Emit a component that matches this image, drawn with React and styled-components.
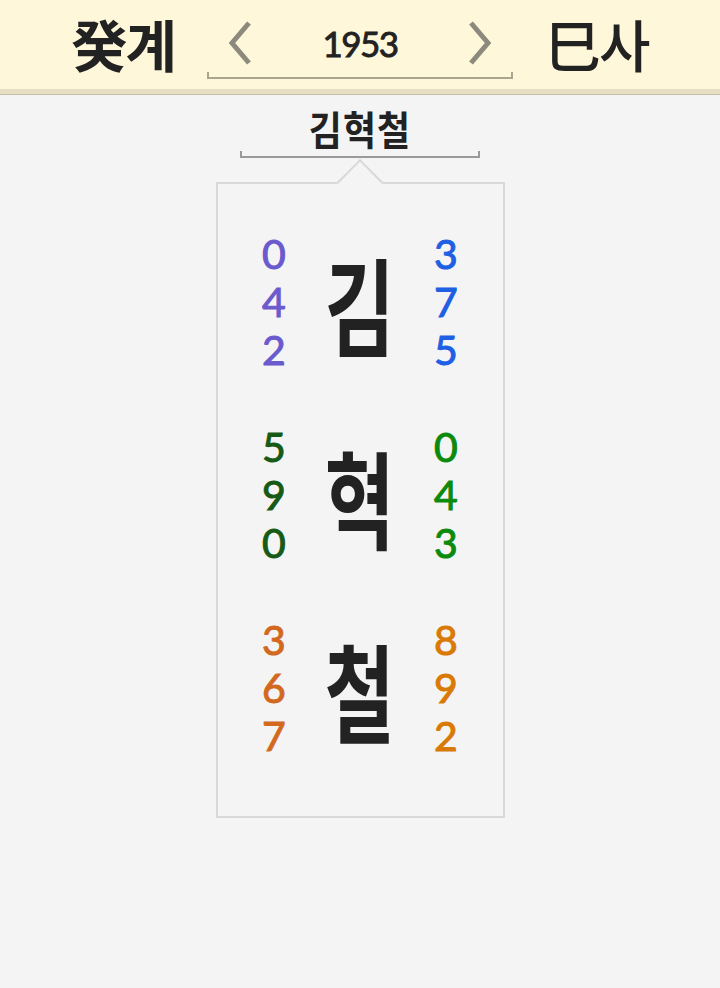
import React from 'react';
import styled, { createGlobalStyle } from 'styled-components';

const GlobalStyle = createGlobalStyle`
  html, body {
    margin: 0;
    padding: 0;
    background: #f4f4f4;
  }
  body {
    font-family: "Noto Sans CJK KR", "Noto Sans", sans-serif;
    color: #222;
  }
`;

const Page = styled.div`
  width: 720px;
  min-height: 988px;
  background: #f4f4f4;
`;

// Header
const Header = styled.header`
  height: 89px;
  background: #fff7da;
  border-bottom: 5px solid #e6dfc4;
  box-shadow: 0 1px 0 #c4bfa6;
  display: flex;
  align-items: center;
  justify-content: center;
  gap: 32px;
`;

const Ganji = styled.div`
  font-family: "Noto Sans CJK KR", "Noto Sans CJK SC", sans-serif;
  font-size: 56px;
  font-weight: ${(props) => (props.bold ? 700 : 500)};
  line-height: 1;
  letter-spacing: -2px;
  color: #222;
  margin-top: -4px;
`;

const YearBox = styled.div`
  position: relative;
  width: 306px;
  height: 58px;
  display: flex;
  align-items: center;
  justify-content: space-between;
  padding: 0 18px;
  box-sizing: border-box;
  margin-top: 10px;
  border: 2px solid #a9a58f;
  border-top: none;
  &::before {
    content: '';
    position: absolute;
    left: -2px;
    right: -2px;
    top: 0;
    height: 51px;
    background: #fff7da;
  }
`;

const Arrow = styled.svg`
  position: relative;
  width: 26px;
  height: 44px;
  margin-top: -12px;
`;

const Year = styled.span`
  position: relative;
  font-family: "Lato", "Noto Sans", sans-serif;
  font-size: 35px;
  letter-spacing: -1.5px;
  -webkit-text-stroke: 0.9px #222;
  color: #222;
  margin-top: -12px;
`;

// Name area
const Body = styled.main`
  display: flex;
  flex-direction: column;
  align-items: center;
  padding-top: 10px;
`;

const NameTitle = styled.div`
  font-size: 36px;
  font-weight: 700;
  line-height: 46px;
  color: #222;
  letter-spacing: 1px;
  transform: scaleY(1.12);
`;

const NameBracket = styled.div`
  width: 240px;
  height: 7px;
  box-sizing: border-box;
  border: 2px solid #999;
  border-top: none;
  margin-top: 1px;
`;

const Card = styled.section`
  position: relative;
  width: 289px;
  box-sizing: border-box;
  margin-top: 24px;
  border: 2px solid #d8d8d8;
  background: #f4f4f4;
  padding: 46px 0 56px;
  display: flex;
  flex-direction: column;
  gap: 49px;
  &::before {
    content: '';
    position: absolute;
    top: -18px;
    left: 50%;
    width: 32px;
    height: 32px;
    margin-left: -17px;
    background: #f4f4f4;
    border-top: 2px solid #d8d8d8;
    border-left: 2px solid #d8d8d8;
    transform: rotate(45deg);
  }
`;

const Row = styled.div`
  position: relative;
  display: flex;
  justify-content: center;
  align-items: flex-start;
  gap: 30px;
`;

const Digits = styled.div`
  width: 32px;
  display: flex;
  flex-direction: column;
  align-items: center;
  font-family: "Lato", "Noto Sans", sans-serif;
  font-size: 41px;
  line-height: 48px;
  color: ${(props) => props.color};
  -webkit-text-stroke: 1px ${(props) => props.color};
`;

const CharBox = styled.div`
  width: 80px;
  height: 144px;
  display: flex;
  align-items: center;
  justify-content: center;
`;

const BigChar = styled.span`
  display: inline-block;
  font-size: 80px;
  font-weight: 700;
  line-height: 1;
  color: #222;
  transform: scale(0.95, 1.32);
`;

const rows = [
  { char: '김', left: ['0', '4', '2'], right: ['3', '7', '5'], lc: '#6a5acd', rc: '#1f5fe3' },
  { char: '혁', left: ['5', '9', '0'], right: ['0', '4', '3'], lc: '#165a16', rc: '#0c8a0c' },
  { char: '철', left: ['3', '6', '7'], right: ['8', '9', '2'], lc: '#d2691e', rc: '#d97a06' },
];

const App = () => {
  return (
    <Page>
      <GlobalStyle />
      <Header>
        <Ganji bold>癸계</Ganji>
        <YearBox>
          <Arrow viewBox="0 0 26 44">
            <polyline points="22,2 5,22 22,42" fill="none" stroke="#8b8a7d" strokeWidth="5" />
          </Arrow>
          <Year>1953</Year>
          <Arrow viewBox="0 0 26 44">
            <polyline points="4,2 21,22 4,42" fill="none" stroke="#8b8a7d" strokeWidth="5" />
          </Arrow>
        </YearBox>
        <Ganji>巳사</Ganji>
      </Header>
      <Body>
        <NameTitle>김혁철</NameTitle>
        <NameBracket />
        <Card>
          {rows.map((r) => (
            <Row key={r.char}>
              <Digits color={r.lc}>
                {r.left.map((d, i) => (
                  <span key={i}>{d}</span>
                ))}
              </Digits>
              <CharBox>
                <BigChar>{r.char}</BigChar>
              </CharBox>
              <Digits color={r.rc}>
                {r.right.map((d, i) => (
                  <span key={i}>{d}</span>
                ))}
              </Digits>
            </Row>
          ))}
        </Card>
      </Body>
    </Page>
  );
};

export default App;
